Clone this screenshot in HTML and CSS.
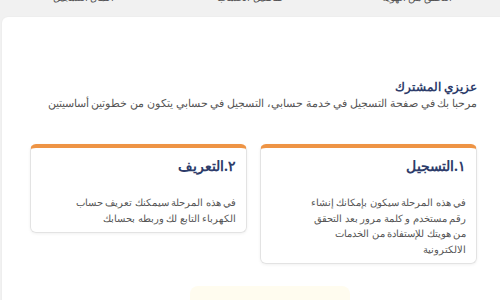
FILE: index.html
```html
<!DOCTYPE html>
<html lang="ar" dir="rtl">
<head>
<meta charset="utf-8">
<link rel="stylesheet" href="styles.css">
</head>
<body>
<div class="steps">
  <div class="step">التحقق من الهوية</div>
  <div class="step">تفاصيل الحساب</div>
  <div class="step">اكمال التسجيل</div>
</div>
<div class="panel">
  <h2 class="greet">عزيزي المشترك</h2>
  <div class="intro"><span class="intro-line">مرحبا بك في صفحة التسجيل في خدمة حسابي، التسجيل في حسابي يتكون من خطوتين أساسيتين</span></div>
  <div class="cards">
    <div class="card">
      <h3 class="card-title">١.التسجيل</h3>
      <p class="card-text">في هذه المرحلة سيكون بإمكانك إنشاء<br>رقم مستخدم و كلمة مرور بعد التحقق<br>من هويتك للإستفادة من الخدمات<br>الالكترونية</p>
    </div>
    <div class="card">
      <h3 class="card-title">٢.التعريف</h3>
      <p class="card-text">في هذه المرحلة سيمكنك تعريف حساب<br>الكهرباء التابع لك وربطه بحسابك</p>
    </div>
  </div>
  <div class="actions"><div class="btn"></div></div>
</div>
</body>
</html>
```
FILE: styles.css
```css
html, body {
  margin: 0;
  padding: 0;
  width: 500px;
  height: 300px;
  overflow: hidden;
  background: #f1f1f1;
  font-family: "Noto Sans", sans-serif;
}
.steps {
  display: flex;
  height: 27px;
  margin-top: -10px;
}
.step {
  flex: 1;
  text-align: center;
  font-size: 10px;
  color: #555;
  line-height: 14px;
}
.panel {
  background: #fff;
  margin-left: 2px;
  margin-right: -12px;
  border-radius: 6px 0 0 0;
  padding: 60px 35px 0 28px;
  height: 300px;
  box-shadow: 0 0 2px rgba(0,0,0,0.05);
}
.greet {
  margin: 0;
  font-size: 12px;
  font-weight: bold;
  color: #2d3c6a;
  line-height: 20px;
}
.intro {
  margin: -2px 0 0 0;
  height: 16px;
  font-size: 10.5px;
  color: #555;
  line-height: 16px;
  overflow: hidden;
}
.intro-line {
  white-space: nowrap;
}
.cards {
  display: flex;
  gap: 13px;
  margin-top: 33px;
  align-items: flex-start;
}
.card {
  width: 217px;
  box-sizing: border-box;
  border: 1px solid #e3e3e3;
  border-top: 4px solid #ee9445;
  border-radius: 6px;
  padding: 7px 10px 6px 10px;
  box-shadow: 0 1px 3px rgba(0,0,0,0.06);
}
.card-title {
  margin: 0;
  font-size: 14px;
  font-weight: bold;
  color: #2d3c6a;
  line-height: 22px;
}
.card-text {
  margin: 18px 0 0 0;
  font-size: 9.5px;
  color: #555;
  line-height: 15.5px;
}
.actions {
  display: flex;
  justify-content: flex-end;
  padding-left: 160px;
  margin-top: 22px;
}
.btn {
  width: 160px;
  height: 30px;
  background: #fffcef;
  border-radius: 8px;
}
```
